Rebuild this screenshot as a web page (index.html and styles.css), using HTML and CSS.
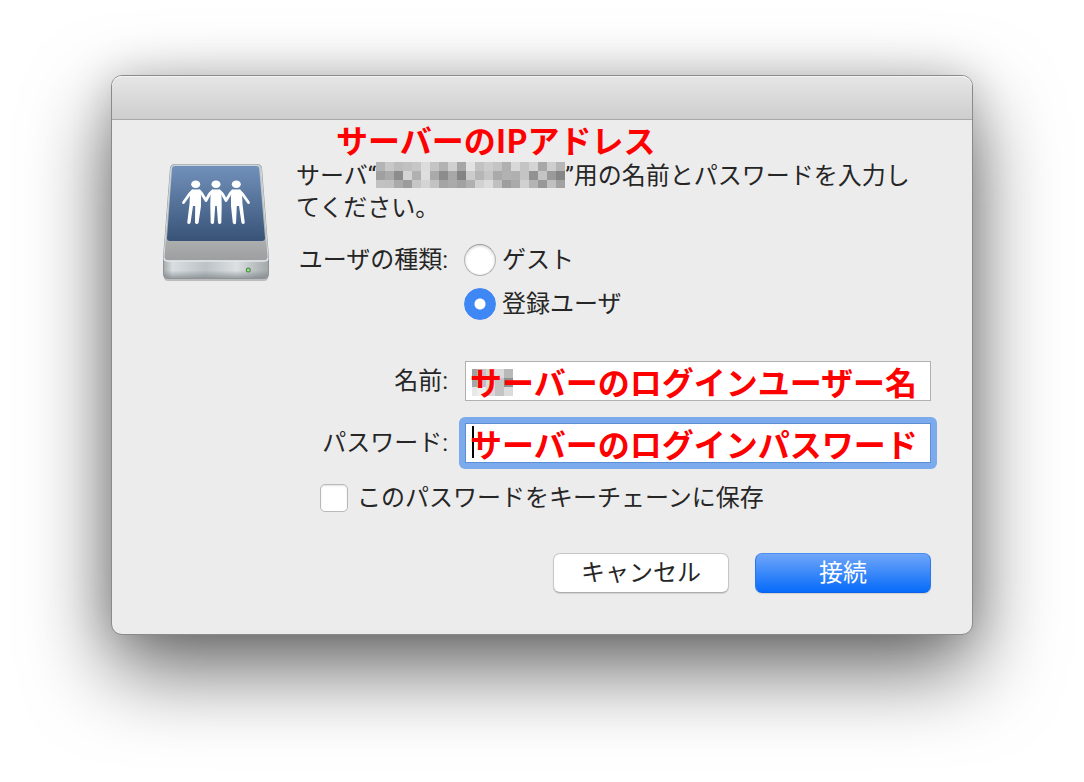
FILE: index.html
```html
<!DOCTYPE html>
<html lang="ja">
<head>
<meta charset="UTF-8">
<meta name="viewport" content="width=device-width, initial-scale=1.0">
<title>サーバへ接続</title>
<link rel="stylesheet" href="styles.css">
</head>
<body>

<main class="dialog">
    <header class="titlebar"></header>

    <form class="dialog-body">
        <!-- Shared drive icon -->
        <svg class="drive-icon" viewBox="0 0 108 124" aria-hidden="true">
            <defs>
                <linearGradient id="panel" x1="0" y1="0" x2="0" y2="1">
                    <stop offset="0" stop-color="#7190ba"/>
                    <stop offset="1" stop-color="#385377"/>
                </linearGradient>
                <linearGradient id="top" x1="0" y1="0" x2="0" y2="1">
                    <stop offset="0" stop-color="#c3cbd2"/>
                    <stop offset="0.75" stop-color="#b0b1b1"/>
                    <stop offset="1" stop-color="#9c9e9f"/>
                </linearGradient>
                <linearGradient id="front" x1="0" y1="0" x2="1" y2="0">
                    <stop offset="0" stop-color="#a6abae"/>
                    <stop offset="0.08" stop-color="#d9dee1"/>
                    <stop offset="0.4" stop-color="#bcc2c6"/>
                    <stop offset="0.7" stop-color="#dce0e3"/>
                    <stop offset="1" stop-color="#a3a8ab"/>
                </linearGradient>
                <linearGradient id="shade" x1="0" y1="0" x2="0" y2="1">
                    <stop offset="0.6" stop-color="#70777b" stop-opacity="0"/>
                    <stop offset="1" stop-color="#70777b" stop-opacity="0.6"/>
                </linearGradient>
            </defs>
            <rect x="2" y="113" width="104" height="8" rx="4" fill="#000" opacity="0.2"/>
            <path d="M13 4H95Q99 4 100 8L107 98V114Q107 119 102 119H6Q1 119 1 114V98L8 8Q9 4 13 4Z" fill="#8e9599"/>
            <path d="M13 5H95Q98 5 99 8L106 97Q106 101 102 101H6Q2 101 2 97L9 8Q10 5 13 5Z" fill="url(#top)" stroke="#d3dadd" stroke-width="1"/>
            <path d="M2 99Q3 101 6 101H102Q105 101 106 99V113Q106 118 101 118H7Q2 118 2 113Z" fill="url(#front)"/>
            <path d="M2 99Q3 101 6 101H102Q105 101 106 99V113Q106 118 101 118H7Q2 118 2 113Z" fill="url(#shade)"/>
            <path d="M2 98Q2 101 6 101H102Q106 101 106 98" fill="none" stroke="#e2e7e9" stroke-width="1.3"/>
            <path d="M13 6H94Q97 6 97.200 9L103 78Q103 81 100 81H8Q5 81 5 78L10 9Q10 6 13 6Z" fill="url(#panel)"/>
            <g fill="#fff">
                <ellipse cx="33.700" cy="24.300" rx="4.500" ry="3.800"/>
                <ellipse cx="54" cy="24.300" rx="4.500" ry="3.800"/>
                <ellipse cx="74.300" cy="24.300" rx="4.500" ry="3.800"/>
                <path d="M30 29.500H38L39 36V46L36.500 63Q35 65 33 63L33.200 46H31L28.500 63Q27 65 25.200 63L27.500 44L28 34Z"/>
                <path d="M50 29.500H58L59.500 36L59.700 46L59.300 63Q57.500 65 56 63L54.800 46H53.200L52 63Q50.500 65 48.700 63L48.300 46L48.500 36Z"/>
                <path d="M70.300 29.500H78.300L80 34L80.500 44L82.800 63Q81 65 79.500 63L77 46H74.800L74 63.500Q72 65 70.800 63L69 46V36Z"/>
            </g>
            <path d="M30.500 31L27.500 34L21.500 42.500M37.500 31L40 34L44 40.500L47.500 34L50.500 31M57.500 31L60.500 34L64 40.500L68 34L70.500 31M77.500 31L80.500 34L86.500 42.500" fill="none" stroke="#fff" stroke-width="2.800" stroke-linecap="round" stroke-linejoin="round"/>
            <circle cx="86.300" cy="110" r="2.500" fill="#50834e"/>
            <circle cx="86.300" cy="110" r="1.500" fill="#8be57c"/>
        </svg>

        <div class="content">
            <div class="message">
                <p>サーバ“<svg class="mosaic" id="address-mosaic" width="189" height="26" aria-hidden="true"></svg>”用の名前とパスワードを入力してください。</p>
                <span class="note note-address">サーバーのIPアドレス</span>
            </div>

            <div class="user-type" role="radiogroup" aria-labelledby="type-label">
                <span class="label" id="type-label">ユーザの種類:</span>
                <div class="options">
                    <label class="option"><input type="radio" name="type" value="guest">ゲスト</label>
                    <label class="option"><input type="radio" name="type" value="registered" checked>登録ユーザ</label>
                </div>
            </div>

            <div class="fields">
                <label class="label" for="name">名前:</label>
                <div class="control">
                    <input type="text" id="name" name="name">
                    <svg class="name-mosaic" id="name-mosaic" width="41" height="27" aria-hidden="true"></svg>
                    <span class="note note-field">サーバーのログインユーザー名</span>
                </div>
                <label class="label" for="password">パスワード:</label>
                <div class="control focused">
                    <input type="password" id="password" name="password">
                    <span class="caret"></span>
                    <span class="note note-field">サーバーのログインパスワード</span>
                </div>
            </div>

            <label class="keychain"><input type="checkbox" name="keychain">このパスワードをキーチェーンに保存</label>

            <div class="buttons">
                <button type="button">キャンセル</button>
                <button type="submit" class="primary">接続</button>
            </div>
        </div>
    </form>
</main>

<script>
// grey levels, one string per row, two hex digits per cell
const addressRows = [
    "b4c8bcc0c6dcc4b2d0a6e2c2ccc4b0d8c4d4a8ceb6",
    "a0aa8cd4b0deaa8ca884ccb6c6aab2b0c492c49a86",
    "c2c0aa9cc6d4c2a4aaa2b0d2dcc09eaad0b498c0a2"
];
const nameRows = ["a0c4d4dab8", "a8c0dcc490", "e8eed8c4dc"];

function drawMosaic(id, rows, firstWidth) {
    let html = "";
    rows.forEach((row, r) => {
        let x = 0;
        row.match(/../g).forEach((g, c) => {
            const w = c === 0 ? firstWidth : 9;
            html += `<rect x="${x}" y="${r * 9}" width="${w}" height="9" fill="#${g}${g}${g}"/>`;
            x += w;
        });
    });
    document.getElementById(id).innerHTML = html;
}

drawMosaic("address-mosaic", addressRows, 9);
drawMosaic("name-mosaic", nameRows, 5);
</script>

</body>
</html>
```

FILE: styles.css
```css
* {
    box-sizing: border-box;
}
body {
    margin: 0;
    padding: 75px 111px;
    min-height: 100vh;
    background: #fff;
    color: #262626;
    font-family: Roboto, "Noto Sans CJK JP", sans-serif;
    font-size: 24px;
    line-height: 32px;
}
.dialog {
    border: 1px solid #8a8a8a;
    border-radius: 11px;
    background: #ececec;
    box-shadow: 0 34px 84px rgba(0, 0, 0, 0.6), 0 0 40px rgba(0, 0, 0, 0.15);
}
.titlebar {
    height: 44px;
    border-bottom: 1px solid #a9a9a9;
    border-radius: 10px 10px 0 0;
    background: linear-gradient(#e6e6e6, #cecece);
    box-shadow: inset 0 1px 0 #f4f4f4;
}
.dialog-body {
    display: flex;
    gap: 26px;
    padding: 40px 41px 41px 50px;
}
.drive-icon {
    flex: none;
    width: 108px;
    height: 124px;
}
.content {
    flex: 1;
}
.message {
    position: relative;
    margin-bottom: 20px;
}
.message p {
    margin: 0;
}
.mosaic {
    height: 26px;
    vertical-align: -4px;
}
.note {
    position: absolute;
    color: #f00;
    font-family: "Noto Sans CJK JP", sans-serif;
    font-size: 32px;
    font-weight: bold;
    line-height: 32px;
    white-space: nowrap;
    pointer-events: none;
}
.note-address {
    left: 40px;
    top: -37px;
}
.note-field {
    left: 5px;
    top: 4px;
}
.user-type, .fields {
    display: grid;
    grid-template-columns: 152px 1fr;
    column-gap: 16px;
}
.fields {
    column-gap: 17px;
    row-gap: 22px;
    align-items: center;
    margin: 41px 0 21px;
}
.label {
    text-align: right;
    white-space: nowrap;
}
.options {
    display: flex;
    flex-direction: column;
    gap: 12px;
}
.option {
    display: flex;
    gap: 6px;
}
input {
    appearance: none;
    margin: 0;
    background: #fff;
}
input[type="radio"] {
    width: 32px;
    height: 32px;
    border: 1px solid #b4b4b4;
    border-top-color: #999;
    border-radius: 50%;
    box-shadow: inset 0 1px 3px rgba(0, 0, 0, 0.2);
}
input[type="radio"]:checked {
    border-color: #3f87f5;
    background: radial-gradient(circle, #fff 5px, #3f87f5 6px);
    box-shadow: none;
}
.control {
    position: relative;
}
.control input {
    display: block;
    position: relative;
    width: 100%;
    height: 40px;
    padding: 0 6px;
    border: 1px solid #b1b1b1;
    outline: 0;
    font: inherit;
}
/* focus ring */
.focused::before {
    content: "";
    position: absolute;
    inset: -6px;
    border-radius: 6px;
    background: #7babed;
}
.focused input {
    border-color: #5b8fd6;
}
.name-mosaic {
    position: absolute;
    left: 7px;
    top: 8px;
}
.caret {
    position: absolute;
    left: 7px;
    top: 3px;
    width: 2px;
    height: 32px;
    background: #000;
}
.keychain {
    display: flex;
    align-items: center;
    gap: 9px;
    height: 28px;
    margin-left: 24px;
}
input[type="checkbox"] {
    width: 28px;
    height: 28px;
    border: 1px solid #b9b9b9;
    border-radius: 5px;
    box-shadow: inset 0 1px 2px rgba(0, 0, 0, 0.12);
}
.buttons {
    display: flex;
    justify-content: flex-end;
    gap: 26px;
    margin-top: 41px;
}
button {
    width: 176px;
    height: 40px;
    padding: 0;
    border: 1px solid #c6c6c6;
    border-bottom-color: #adadad;
    border-radius: 7px;
    background: #fff;
    box-shadow: 0 1px 1px rgba(0, 0, 0, 0.12);
    color: inherit;
    font: inherit;
}
button.primary {
    border-color: #4b8df0 #2a78ee #0a62e8;
    background: linear-gradient(#6fa6f8, #066bfa);
    color: #fff;
}
```
